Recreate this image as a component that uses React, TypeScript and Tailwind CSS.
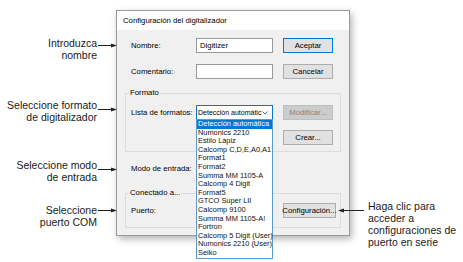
import type { ReactNode } from "react";

const FORMATS = [
  "Detección automática",
  "Numonics 2210",
  "Estilo Lápiz",
  "Calcomp C,D,E,A0,A1",
  "Format1",
  "Format2",
  "Summa MM 1105-A",
  "Calcomp 4 Digit",
  "Format5",
  "GTCO Super LII",
  "Calcomp 9100",
  "Summa MM 1105-A!",
  "Fortron",
  "Calcomp 5 Digit (User)",
  "Numonics 2210 (User)",
  "Seiko",
];

function Row({
  label,
  control,
  button,
  className = "",
}: {
  label?: string;
  control?: ReactNode;
  button?: ReactNode;
  className?: string;
}) {
  return (
    <div className={`flex h-[15px] items-center ${className}`}>
      <span className="w-[65px] shrink-0 whitespace-nowrap">{label}</span>
      <div className="w-[77px] shrink-0">{control}</div>
      <div className="ml-[10px]">{button}</div>
    </div>
  );
}

function Button({
  children,
  variant = "normal",
  width = "w-[50px]",
}: {
  children: ReactNode;
  variant?: "normal" | "default" | "disabled";
  width?: string;
}) {
  const styles = {
    normal: "border-[#adadad] bg-[#e1e1e1] text-black",
    default: "border-[#0078d7] bg-[#e1e1e1] text-black",
    disabled: "border-[#bfbfbf] bg-[#cccccc] text-[#838383]",
  }[variant];
  return (
    <div className={`flex h-[15px] ${width} items-center justify-center border ${styles}`}>
      {children}
    </div>
  );
}

function Input({ value = "" }: { value?: string }) {
  return (
    <div className="flex h-[15px] w-[77px] items-center border border-[#9a9a9a] bg-white pl-[3px]">
      {value}
    </div>
  );
}

function Group({ label, className, children }: { label: string; className: string; children: ReactNode }) {
  return (
    <div className={`relative border border-[#dcdcdc] ${className}`}>
      <span className="absolute -top-[6px] left-[3px] bg-[#f0f0f0] px-[1px] leading-[10px]">{label}</span>
      {children}
    </div>
  );
}

function FormatSelect() {
  return (
    <div className="relative flex h-[15px] w-[77px] items-center border border-[#0078d7] bg-white pl-[1px]">
      <span className="w-[63px] whitespace-nowrap text-[7px]">Detección automátic</span>
      <svg className="absolute right-[4px] top-[5px]" width="6" height="4" viewBox="0 0 6 4">
        <path d="M0.5 0.5 L3 3 L5.5 0.5" fill="none" stroke="#555" strokeWidth="0.9" />
      </svg>
      {/* Open list */}
      <div className="absolute -left-[1px] top-[13px] z-10 w-[77px] border border-[#5b9bd5] bg-white text-[7.4px] text-[#111]">
        {FORMATS.map((f, i) => (
          <div
            key={f}
            className={`h-[8.6px] whitespace-nowrap pl-[1px] leading-[8.6px] ${
              i === 0 ? "bg-[#0078d7] text-white" : ""
            }`}
          >
            {f}
          </div>
        ))}
      </div>
    </div>
  );
}

function Dialog() {
  return (
    <div className="flex h-[226px] w-[234px] flex-col border border-[#9a9a9a] bg-[#f0f0f0] text-[7.75px] leading-[10px] text-black shadow-[2px_3px_7px_rgba(0,0,0,0.3)]">
      <div className="flex h-[19px] shrink-0 items-center bg-white pl-[6px]">Configuración del digitalizador</div>
      <div className="flex flex-col px-[8px] pt-[8px]">
        <Row className="pl-[6px]" label="Nombre:" control={<Input value="Digitizer" />} button={<Button variant="default">Aceptar</Button>} />
        <Row className="mt-[11px] pl-[6px]" label="Comentario:" control={<Input />} button={<Button>Cancelar</Button>} />
        <Group label="Formato" className="mt-[14px] pb-[6px] pt-[11px]">
          <Row
            className="pl-[5px]"
            label="Lista de formatos:"
            control={<FormatSelect />}
            button={<Button variant="disabled">Modificar...</Button>}
          />
          <Row className="mt-[10px] pl-[5px]" button={<Button>Crear...</Button>} />
        </Group>
        <Row className="mt-[9px] pl-[6px]" label="Modo de entrada:" />
        <Group label="Conectado a..." className="mt-[17px] pb-[9px] pt-[9px]">
          <Row className="pl-[5px]" label="Puerto:" button={<Button width="w-[53px]">Configuración...</Button>} />
        </Group>
      </div>
    </div>
  );
}

function Arrows() {
  const left = [45.5, 109.5, 169.5, 210.5];
  return (
    <svg className="pointer-events-none absolute inset-0" width="463" height="262">
      {left.map((y) => (
        <g key={y}>
          <line x1="98" y1={y} x2="112" y2={y} stroke="#222" strokeWidth="1" />
          <path d={`M117 ${y} L111 ${y - 2} L111 ${y + 2} Z`} fill="#222" />
        </g>
      ))}
      <line x1="343" y1="210.5" x2="364" y2="210.5" stroke="#222" strokeWidth="1" />
      <path d="M338 210.5 L344 208.5 L344 212.5 Z" fill="#222" />
    </svg>
  );
}

function Callouts() {
  const note = "absolute text-[10.5px] leading-[12px] text-[#1a1a1a] whitespace-nowrap";
  return (
    <>
      <div className={`${note} right-[366px] top-[37px] text-right leading-[11px]`}>
        Introduzca
        <br />
        nombre
      </div>
      <div className={`${note} right-[366px] top-[99px] text-right`}>
        Seleccione formato
        <br />
        de digitalizador
      </div>
      <div className={`${note} right-[366px] top-[159px] text-right`}>
        Seleccione modo
        <br />
        de entrada
      </div>
      <div className={`${note} right-[366px] top-[204px] text-right`}>
        Seleccione
        <br />
        puerto COM
      </div>
      <div className={`${note} left-[368px] top-[200px]`}>
        Haga clic para
        <br />
        acceder a
        <br />
        configuraciones de
        <br />
        puerto en serie
      </div>
    </>
  );
}

export default function App() {
  return (
    <div className="relative h-[262px] w-[463px] overflow-hidden bg-white font-['Liberation_Sans',Arial,sans-serif]">
      <div className="pl-[116px] pt-[10px]">
        <Dialog />
      </div>
      <Callouts />
      <Arrows />
    </div>
  );
}
